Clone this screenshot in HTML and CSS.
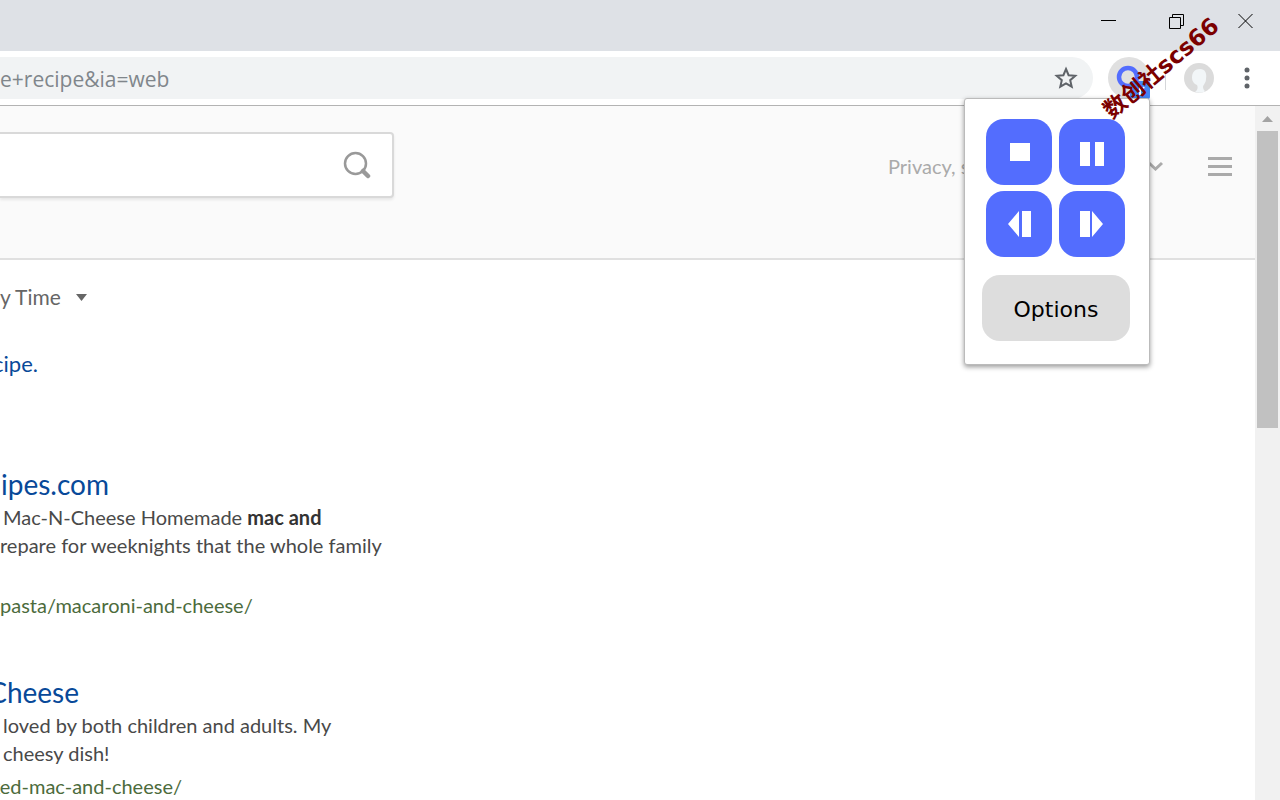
FILE: index.html
```html
<!DOCTYPE html>
<html lang="en">
<head>
<meta charset="utf-8">
<title>Recipe search</title>
<link rel="stylesheet" href="styles.css">
</head>
<body>
<div class="browser">
  <header class="titlebar">
    <button class="window-button" aria-label="Minimize"><svg width="16" height="16" viewBox="0 0 16 16"><path d="M1 7.5H16"/></svg></button>
    <button class="window-button" aria-label="Restore"><svg width="16" height="16" viewBox="0 0 16 16"><path d="M.5 4.500H11.500V15.500H.5zM3.500 4V1.500H14.500V12.500H12"/></svg></button>
    <button class="window-button" aria-label="Close"><svg width="16" height="16" viewBox="0 0 16 16"><path d="M.5 1L14.500 15M14.500 1L.5 15"/></svg></button>
  </header>
  <div class="toolbar">
    <div class="address">
      <input class="address-input" type="text" aria-label="Address" value="e+recipe&amp;ia=web">
      <button class="star" aria-label="Bookmark"><svg width="24" height="24" viewBox="0 0 24 24"><path d="M12 3L14.600 9.200L21.300 9.800L16.200 14.200L17.700 20.700L12 17.300L6.300 20.700L7.800 14.200L2.700 9.800L9.400 9.200Z"/></svg></button>
    </div>
    <button class="extension" aria-label="Extension">
      <svg width="42" height="42" viewBox="0 0 42 42"><circle cx="21" cy="21" r="21" fill="#e0e0e0"/><circle cx="20" cy="20" r="9" fill="none" stroke="#536dfe" stroke-width="4.500"/><rect x="22" y="24" width="20" height="18" rx="2" fill="#4285f4"/><path d="M32 30V38M36 30L34 33" stroke="#fff" stroke-width="2"/></svg>
    </button>
    <span class="divider"></span>
    <button class="profile" aria-label="Profile">
      <svg width="30" height="30" viewBox="0 0 30 30"><circle cx="15" cy="15" r="15" fill="#dbdbdb"/><path d="M8 15C8 9 11 6 16 6C21 6 23 10 22 16C22 20 19 22 19 24C19 27 22 28 20 29C17 30 14 30 11 29C14 27 14 24 13 22C10 21 8 18 8 15Z" fill="#f2f6f8"/></svg>
    </button>
    <button class="more" aria-label="Menu"><svg width="6" height="22" viewBox="0 0 6 22"><circle cx="3" cy="3" r="2.500"/><circle cx="3" cy="11" r="2.500"/><circle cx="3" cy="19" r="2.500"/></svg></button>
  </div>
  <div class="viewport">
    <main class="page">
      <div class="page-header">
        <form class="search">
          <input class="search-input" type="text" aria-label="Search">
          <button class="search-button" type="button" aria-label="Search"><svg width="28" height="28" viewBox="0 0 28 28"><circle cx="12.500" cy="12.500" r="10.500" fill="none" stroke="#999" stroke-width="2.500"/><path d="M20 20L25 25" stroke="#999" stroke-width="4.500" stroke-linecap="round"/></svg></button>
        </form>
        <div class="header-links">
          <a class="privacy" href="#">Privacy, simplified.</a>
          <svg class="chevron" width="16" height="10" viewBox="0 0 16 10"><path d="M1 2L7.500 8L14 2"/></svg>
          <button class="hamburger" aria-label="Page menu"><span></span><span></span><span></span></button>
        </div>
      </div>
      <div class="results">
        <button class="time-filter">y Time <svg width="11" height="7" viewBox="0 0 11 7"><path d="M0 0H11L5.500 7Z"/></svg></button>
        <p class="notice"><a href="#">cipe</a>.</p>
        <article class="result result-first">
          <h2 class="result-title title-first"><a href="#">ipes.com</a></h2>
          <p class="snippet snippet-first"><span class="indent">Mac-N-Cheese Homemade <b>mac and</b></span><br>repare for weeknights that the whole family</p>
          <a class="result-url" href="#">pasta/macaroni-and-cheese/</a>
        </article>
        <article class="result">
          <h2 class="result-title title-second"><a href="#">Cheese</a></h2>
          <p class="snippet indent">loved by both children and adults. My<br>cheesy dish!</p>
          <a class="result-url url-second" href="#">ked-mac-and-cheese/</a>
        </article>
      </div>
    </main>
    <div class="scrollbar" aria-hidden="true">
      <svg width="11" height="6" viewBox="0 0 11 6"><path d="M0 6L5.500 0L11 6Z"/></svg>
      <div class="thumb"></div>
    </div>
  </div>
  <section class="popup">
    <div class="controls">
      <button class="control" aria-label="Stop"><svg width="66" height="66" viewBox="0 0 66 66"><path d="M24 24H44V42H24Z"/></svg></button>
      <button class="control" aria-label="Pause"><svg width="66" height="66" viewBox="0 0 66 66"><path d="M21 23H31V47H21ZM36 23H45V47H36Z"/></svg></button>
      <button class="control" aria-label="Previous"><svg width="66" height="66" viewBox="0 0 66 66"><path d="M33 20V46L22 33ZM36 20H45V46H36Z"/></svg></button>
      <button class="control" aria-label="Next"><svg width="66" height="66" viewBox="0 0 66 66"><path d="M21 20H31V46H21ZM33 20V46L44 33Z"/></svg></button>
    </div>
    <button class="options">Options</button>
  </section>
  <div class="watermark">数创社scs66</div>
</div>
</body>
</html>
```
FILE: styles.css
```css
* { box-sizing: border-box; }
body { margin: 0; background: #fff; font-family: Lato, sans-serif; color: #494949; }
button { border: 0; padding: 0; background: none; font: inherit; color: inherit; }
svg { display: block; flex: none; }
a { text-decoration: none; color: inherit; }
p, h2 { margin: 0; }

.browser { position: relative; display: flex; flex-direction: column; height: 100vh; overflow: hidden; }

.titlebar { flex: none; display: flex; justify-content: flex-end; height: 51px; padding-bottom: 10px; background: #dee1e6; }
.window-button { display: flex; align-items: center; justify-content: center; width: 69px; }
.window-button svg { fill: none; stroke: #000; }

.toolbar { flex: none; display: flex; align-items: center; height: 55px; padding-right: 30px; border-bottom: 1px solid #b3b3b3; }
.address { flex: 1; display: flex; align-items: center; height: 42px; padding-right: 15px; background: #f1f3f4; border-radius: 0 21px 21px 0; }
.address-input { flex: 1; min-width: 0; border: 0; padding: 2px 0 0; background: none; font: 21px/28px "Open Sans", sans-serif; color: #80868b; outline: 0; }
.star svg { fill: none; stroke: #5f6368; stroke-width: 2; }
.extension { margin-left: 15px; }
.divider { width: 1px; height: 24px; margin: 0 18px 0 15px; background: #d5d7da; }
.more { margin-left: 30px; }
.more svg { fill: #5f6368; }

.viewport { flex: 1; display: flex; min-height: 0; }
.page { flex: 1; min-width: 0; overflow: hidden; }
.page-header { display: flex; justify-content: space-between; align-items: flex-start; height: 154px; padding: 26px 23px 0 0; background: #fafafa; border-bottom: 2px solid #e0e0e0; }
.search { display: flex; width: 394px; height: 66px; padding-right: 21px; background: #fff; border: 2px solid #d9d9d9; border-left: 0; border-radius: 0 4px 4px 0; box-shadow: 0 2px 3px rgba(0, 0, 0, .08); }
.search-input { flex: 1; min-width: 0; border: 0; background: none; outline: 0; }
.header-links { display: flex; align-items: center; height: 68px; font-size: 20px; color: #aaa; }
.privacy { width: 260px; white-space: nowrap; }
.chevron { fill: none; stroke: #aaa; stroke-width: 3; }
.hamburger { display: grid; gap: 5px; width: 24px; margin-left: 44px; }
.hamburger span { height: 3px; background: #aaa; }

.results { display: flex; flex-direction: column; align-items: flex-start; padding-top: 23px; }
.time-filter { display: flex; align-items: center; gap: 15px; font-size: 21px; line-height: 28px; color: #666; }
.time-filter svg { fill: #666; }
.notice { display: flex; justify-content: flex-end; width: 38px; margin-top: 38px; overflow: hidden; font-size: 22px; line-height: 30px; color: #084999; }
.result { display: flex; flex-direction: column; align-items: flex-start; margin-top: 54px; font-size: 20px; line-height: 28px; }
.result-first { margin-top: 86px; }
.result-title { display: flex; justify-content: flex-end; overflow: hidden; font-size: 28px; font-weight: 400; line-height: 38px; color: #084999; }
.title-first { width: 109px; }
.title-second { width: 79px; }
.snippet { white-space: nowrap; }
.snippet b { color: #333; }
.snippet-first { margin-bottom: 32px; }
.indent { padding-left: 3px; }
.result-url { color: #4c6b3c; white-space: nowrap; }
.url-second { display: flex; justify-content: flex-end; width: 182px; margin-top: 5px; overflow: hidden; }

.scrollbar { flex: none; display: flex; flex-direction: column; align-items: center; gap: 9px; width: 25px; padding-top: 10px; background: #f1f1f1; }
.scrollbar svg { fill: #a3a3a3; }
.thumb { width: 21px; height: 297px; background: #c1c1c1; }

.popup { position: absolute; top: 98px; right: 130px; width: 186px; padding: 20px 18px 23px 17px; background: #fff; border: 1px solid #bbb; border-radius: 3px; box-shadow: 0 2px 5px rgba(0, 0, 0, .4); }
.controls { display: grid; grid-template-columns: 66px 66px; gap: 6px 7px; padding-left: 4px; }
.control { border-radius: 18px; background: #536dfe; }
.control svg { fill: #fff; }
.options { width: 148px; height: 66px; margin-top: 18px; padding-top: 2px; border-radius: 18px; background: #ddd; font: 22px "DejaVu Sans", sans-serif; color: #000; }

.watermark { position: absolute; top: 50px; right: 48px; transform: rotate(-40deg); font: bold 23px/36px "DejaVu Sans", "Noto Sans CJK SC", sans-serif; color: #7b0000; white-space: nowrap; }
```
